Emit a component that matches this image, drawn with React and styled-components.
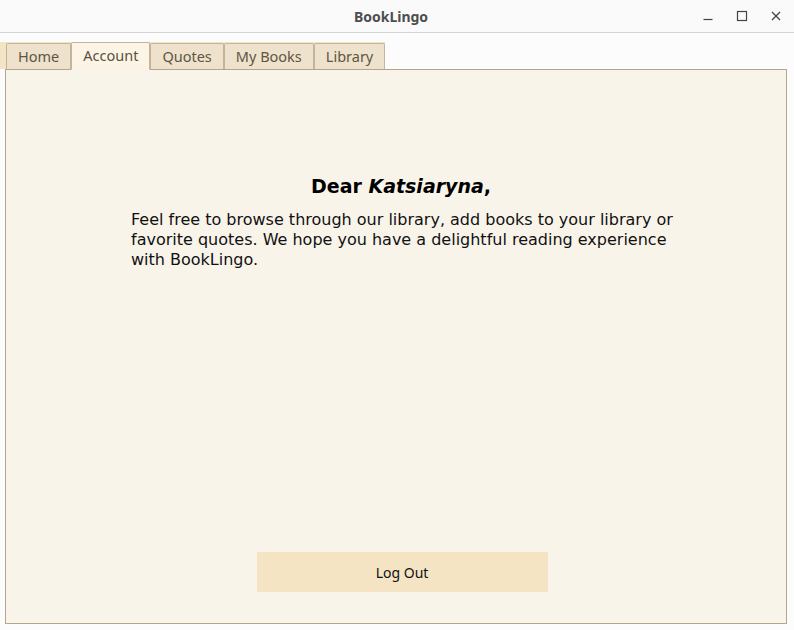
import styled, { createGlobalStyle } from "styled-components";

const GlobalStyle = createGlobalStyle`
  html, body {
    margin: 0;
    padding: 0;
    background: #fcfcfc;
  }
  body {
    font-family: "Noto Sans", "DejaVu Sans", sans-serif;
  }
`;

const tabs = ["Home", "Account", "Quotes", "My Books", "Library"];

export default function App() {
  return (
    <Window>
      <GlobalStyle />
      <TitleBar>
        <Title>BookLingo</Title>
        <Controls>
          <Control>
            <svg width="12" height="12" viewBox="0 0 12 12">
              <line x1="1.5" y1="9.5" x2="10.5" y2="9.5" stroke="#444" strokeWidth="1.2" />
            </svg>
          </Control>
          <Control>
            <svg width="12" height="12" viewBox="0 0 12 12">
              <rect x="1.5" y="1.5" width="9" height="9" fill="none" stroke="#444" strokeWidth="1.2" />
            </svg>
          </Control>
          <Control>
            <svg width="12" height="12" viewBox="0 0 12 12">
              <path d="M2 2 L10 10 M10 2 L2 10" stroke="#444" strokeWidth="1.3" />
            </svg>
          </Control>
        </Controls>
      </TitleBar>
      <Body>
        <TabStrip>
          {tabs.map((t) => (
            <Tab key={t} $active={t === "Account"}>
              {t}
            </Tab>
          ))}
        </TabStrip>
        <Panel>
          <Heading>
            Dear <em>Katsiaryna</em>,
          </Heading>
          <Message>
            Feel free to browse through our library, add books to your library or
            favorite quotes. We hope you have a delightful reading experience
            with BookLingo.
          </Message>
          <Spacer />
          <LogOut>Log Out</LogOut>
        </Panel>
      </Body>
    </Window>
  );
}

const Window = styled.div`
  width: 794px;
  height: 630px;
  display: flex;
  flex-direction: column;
  background: #fcfcfc;
  overflow: hidden;
`;

const TitleBar = styled.div`
  height: 32px;
  flex-shrink: 0;
  border-bottom: 1px solid #d4d4d4;
  background: #fafafa;
  display: flex;
  align-items: center;
  justify-content: center;
  position: relative;
`;

const Title = styled.div`
  font-family: "Noto Sans", sans-serif;
  font-weight: 700;
  font-size: 14px;
  color: #4e4e4e;
  margin-left: -12px;
`;

const Controls = styled.div`
  position: absolute;
  right: 6px;
  top: 0;
  height: 32px;
  display: flex;
  align-items: center;
  gap: 10px;
`;

const Control = styled.div`
  width: 24px;
  height: 24px;
  display: flex;
  align-items: center;
  justify-content: center;
`;

const Body = styled.div`
  flex: 1;
  display: flex;
  flex-direction: column;
  padding: 8px 7px 6px 5px;
`;

const TabStrip = styled.div`
  display: flex;
  align-items: flex-end;
  align-self: flex-start;
  height: 28px;
  margin-left: -5px;
  padding-left: 6px;
  background: linear-gradient(#fcfcfc 0, #fcfcfc 1px, #f3e4c6 1px);
  position: relative;
  z-index: 1;
`;

const Tab = styled.div`
  font-family: "Noto Sans", sans-serif;
  font-size: 14.5px;
  color: ${(p) => (p.$active ? "#5a5040" : "#5e5545")};
  background: ${(p) => (p.$active ? "#fcf4e4" : "#eee2cc")};
  border: 1px solid #c3b59a;
  border-bottom: ${(p) => (p.$active ? "1px solid #fcf4e4" : "none")};
  border-radius: 2px 2px 0 0;
  height: ${(p) => (p.$active ? "28px" : "26px")};
  padding: 0 11px;
  margin-bottom: ${(p) => (p.$active ? "-1px" : "0")};
  display: flex;
  align-items: ${(p) => (p.$active ? "center" : "flex-end")};
  padding-bottom: ${(p) => (p.$active ? "2px" : "3px")};
  box-sizing: border-box;
`;

const Panel = styled.div`
  flex: 1;
  border: 1px solid #b3a68b;
  background: #f9f4ea;
  display: flex;
  flex-direction: column;
  align-items: center;
  padding-top: 105px;
  padding-bottom: 31px;
`;

const Heading = styled.h2`
  margin: 0;
  font-family: "DejaVu Sans", sans-serif;
  font-size: 19px;
  font-weight: 700;
  line-height: 23px;
  color: #000;
  margin-left: 10px;
  em {
    font-style: italic;
  }
`;

const Message = styled.p`
  margin: 12px 0 0 0;
  align-self: flex-start;
  margin-left: 125px;
  width: 560px;
  font-family: "DejaVu Sans", sans-serif;
  font-size: 16px;
  line-height: 20px;
  color: #111;
`;

const Spacer = styled.div`
  flex: 1;
`;

const LogOut = styled.button`
  width: 291px;
  height: 40px;
  border: none;
  background: #f5e4c4;
  font-family: "Noto Sans", sans-serif;
  font-size: 14px;
  color: #111;
  margin-left: 12px;
  cursor: pointer;
`;
